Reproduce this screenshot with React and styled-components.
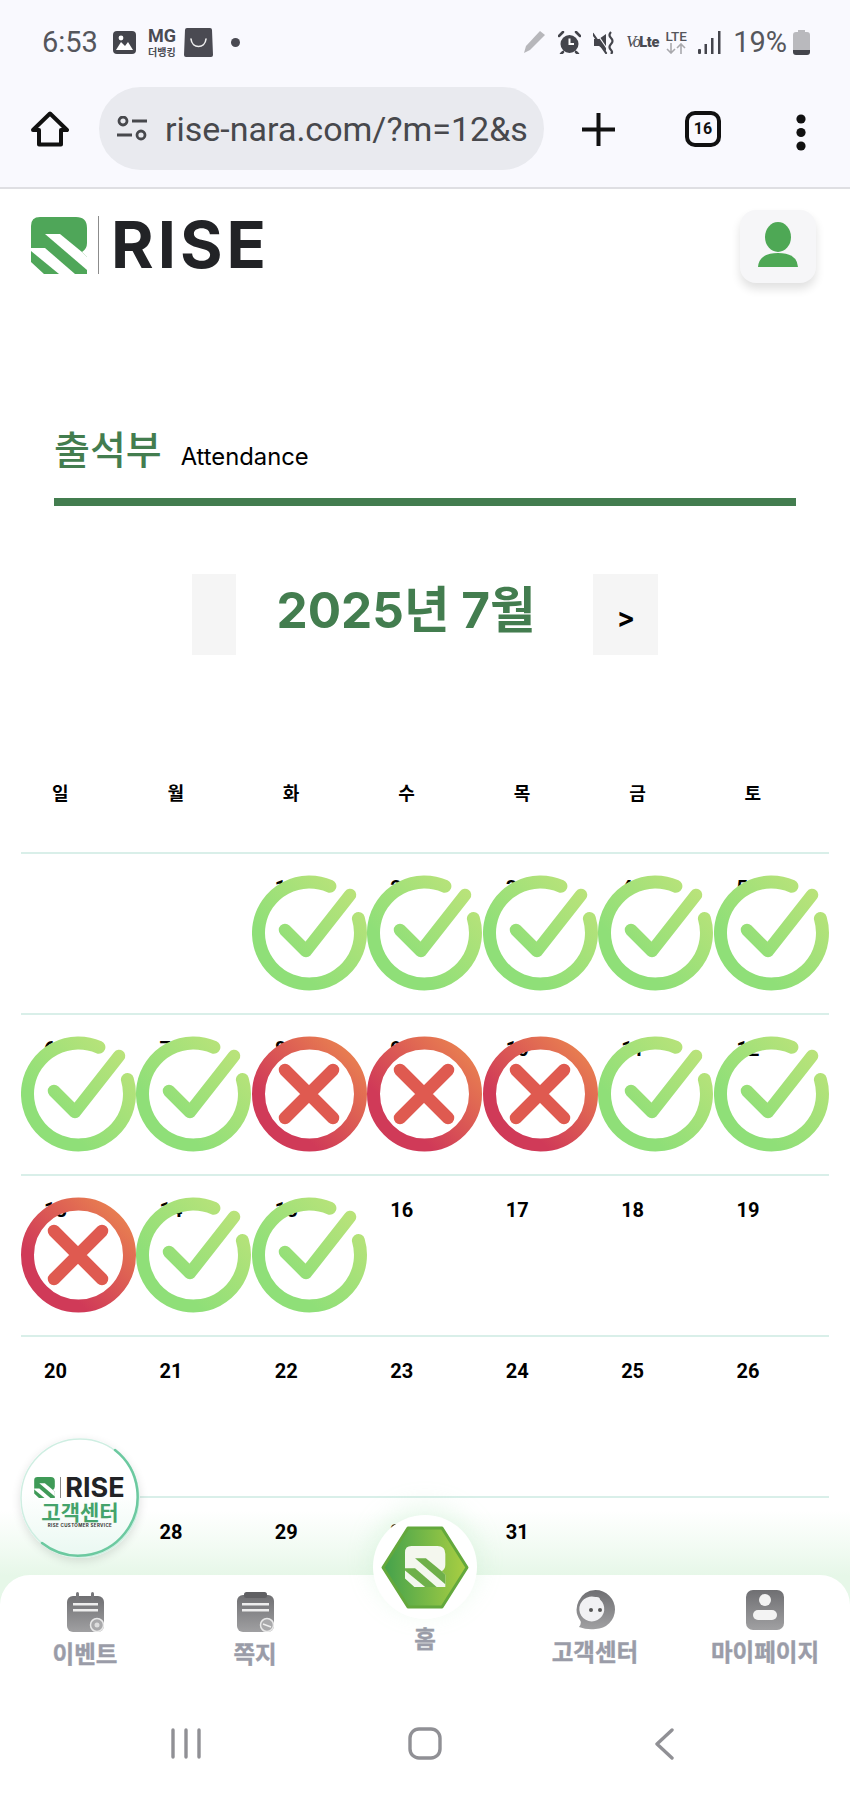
import React, { useId } from "react";
import styled, { createGlobalStyle } from "styled-components";

const Global = createGlobalStyle`
  html, body { margin: 0; padding: 0; background: #fff; }
  body { font-family: Roboto, "Noto Sans CJK KR", sans-serif; }
  * { box-sizing: border-box; }
`;

const KR = `Inter, "Noto Sans CJK KR", sans-serif`;

const Page = styled.div`
  position: relative;
  width: 850px;
  height: 1794px;
  overflow: hidden;
  background: #fff;
`;

/* ---- phone chrome ---- */
const StatusBar = styled.div`
  height: 78px;
  background: #f9f9fe;
  display: flex;
  justify-content: space-between;
  align-items: center;
  padding: 6px 40px 0 42px;
  color: #55565c;
`;
const StatusGroup = styled.div`
  display: flex;
  align-items: center;
`;
const StatusText = styled.span`
  font: 400 29px/30px Roboto, sans-serif;
  color: #55565c;
  margin: ${(p) => p.$m || 0};
`;
const StatusIcon = styled.svg`
  display: block;
  flex: none;
  margin: ${(p) => p.$m || 0};
`;
const MgBlock = styled.div`
  width: 30px;
  margin: 0 7px 0 11px;
  display: flex;
  flex-direction: column;
  align-items: center;
  color: #4a4b52;
`;
const MgTop = styled.span`
  font: 700 18px/18px Roboto, sans-serif;
`;
const MgBottom = styled.span`
  font: 700 10px/13px "Noto Sans CJK KR", sans-serif;
  white-space: nowrap;
`;
const VolteBlock = styled.div`
  width: 32px;
  margin-left: 10px;
  display: flex;
  align-items: baseline;
  color: #4a4b52;
  white-space: nowrap;
`;
const VoText = styled.span`
  font: italic 400 16px/20px "Liberation Serif", serif;
  letter-spacing: -1.5px;
`;
const LteSmall = styled.span`
  font: 900 14.5px/20px Roboto, sans-serif;
  letter-spacing: -0.3px;
`;
const LteBlock = styled.div`
  width: 24px;
  margin: 0 10px 0 6px;
  display: flex;
  flex-direction: column;
  align-items: center;
`;
const LteTop = styled.span`
  font: 500 13.5px/13px Roboto, sans-serif;
  color: #55565c;
`;

const Toolbar = styled.div`
  height: 111px;
  background: #f9f9fe;
  border-bottom: 2px solid #dfdfe3;
  display: flex;
  align-items: flex-start;
  padding: 9px 0 0 31px;
`;
const UrlPill = styled.div`
  width: 445px;
  height: 83px;
  margin-left: 30px;
  border-radius: 42px;
  background: #e9eaef;
  display: flex;
  align-items: center;
  padding: 0 16px 0 18px;
`;
const UrlText = styled.div`
  flex: 1;
  margin-left: 18px;
  overflow: hidden;
  white-space: nowrap;
  font: 400 34px/40px Roboto, sans-serif;
  color: #47484c;
`;
const ToolIcon = styled.svg`
  display: block;
  flex: none;
  margin: ${(p) => p.$m || 0};
`;
const TabCount = styled.div`
  width: 36px;
  height: 36px;
  margin: 24px 0 0 70px;
  border: 4px solid #111;
  border-radius: 10px;
  display: flex;
  align-items: center;
  justify-content: center;
  font: 700 16px/1 Roboto, sans-serif;
  color: #111;
`;

/* ---- site header ---- */
const SiteHeader = styled.header`
  display: flex;
  justify-content: space-between;
  align-items: flex-start;
  padding: 21px 34px 0 31px;
`;
const Logo = styled.div`
  display: flex;
  align-items: center;
  margin-top: 6px;
`;
const LogoDivider = styled.div`
  width: 1px;
  height: 58px;
  background: #8c8c8c;
  margin: 0 12px 0 11px;
`;
const LogoWord = styled.span`
  font: 700 65px/58px Inter, sans-serif;
  letter-spacing: 4px;
  color: #222326;
`;
const ProfileButton = styled.div`
  width: 76px;
  height: 73px;
  border-radius: 16px;
  background: #f6f6f8;
  box-shadow: 0 6px 10px rgba(0, 0, 0, 0.12);
  display: flex;
  align-items: center;
  justify-content: center;
`;

/* ---- section title ---- */
const TitleRow = styled.div`
  margin: 139px 54px 0;
  border-bottom: 8px solid #437d4f;
  display: flex;
  align-items: flex-start;
  height: 84px;
`;
const TitleKo = styled.h1`
  margin: 0;
  font: 500 39px/50px "Noto Sans CJK KR", sans-serif;
  color: #437d4f;
`;
const TitleEn = styled.span`
  margin: 20px 0 0 19px;
  font: 400 23.8px/30px Inter, sans-serif;
  color: #000;
`;

/* ---- month nav ---- */
const MonthNav = styled.div`
  margin-top: 68px;
  display: flex;
  justify-content: center;
  align-items: stretch;
  height: 81px;
`;
const MonthButton = styled.div`
  width: ${(p) => p.$w}px;
  background: #f5f5f5;
  display: flex;
  align-items: center;
  justify-content: center;
  padding-top: 6px;
  font: 700 27px/1 Inter, sans-serif;
  color: #000;
`;
const MonthLabel = styled.div`
  margin: 0 58px 0 41px;
  font: 700 49.5px/73px ${KR};
  color: #437d4f;
  white-space: nowrap;
`;

/* ---- calendar ---- */
const Calendar = styled.section`
  position: relative;
  margin: 125px 21px 0;
`;
const WeekHead = styled.div`
  display: grid;
  grid-template-columns: repeat(7, 1fr);
  height: 72px;
`;
const HeadCell = styled.div`
  padding-left: 31px;
  font: 700 18px/24px "Noto Sans CJK KR", sans-serif;
  color: #000;
`;
const Week = styled.div`
  display: grid;
  grid-template-columns: repeat(7, 1fr);
  height: 161px;
  border-top: 2px solid #d9efe9;
`;
const Day = styled.div`
  position: relative;
  padding: 22px 0 0 23px;
  font: 700 20px/24px Roboto, sans-serif;
  color: #000;
`;
const StampSvg = styled.svg`
  position: absolute;
  left: 0;
  top: 21px;
  display: block;
`;

/* ---- bottom ---- */
const Glow = styled.div`
  position: absolute;
  left: 0;
  right: 0;
  top: 1500px;
  height: 105px;
  background: linear-gradient(to bottom, rgba(232, 248, 234, 0) 10%, #f2fbf3 45%, #e6f7e8 72%);
`;
const Bottom = styled.div`
  position: absolute;
  left: 0;
  right: 0;
  bottom: 0;
  height: 219px;
`;
const TabSheet = styled.nav`
  position: relative;
  height: 219px;
  background: #fff;
  border-radius: 30px 30px 0 0;
`;
const Tabs = styled.div`
  display: grid;
  grid-template-columns: repeat(5, 170px);
  padding-top: 15px;
`;
const Tab = styled.div`
  display: flex;
  flex-direction: column;
  align-items: center;
  height: 96px;
  padding-top: ${(p) => p.$pt || 0}px;
`;
const TabLabel = styled.span`
  margin-top: ${(p) => p.$mt ?? 7}px;
  font: 700 23.5px/28px "Noto Sans CJK KR", sans-serif;
  -webkit-text-stroke: 0.4px #9a9ca8;
  color: #9a9ca8;
  white-space: nowrap;
`;
const HomeBubble = styled.div`
  position: absolute;
  left: 373px;
  top: -60px;
  width: 104px;
  height: 104px;
  border-radius: 50%;
  background: #fff;
  box-shadow: 0 -8px 26px rgba(170, 230, 180, 0.28);
  display: flex;
  align-items: center;
  justify-content: center;
`;
const SystemBar = styled.div`
  position: absolute;
  left: 0;
  right: 0;
  bottom: 34px;
  display: flex;
  justify-content: center;
  align-items: center;
  gap: 199px;
`;
const SystemSlot = styled.div`
  width: 40px;
  display: flex;
  justify-content: center;
`;

/* ---- floating support badge ---- */
const SupportBadge = styled.div`
  position: absolute;
  left: 20px;
  top: 1438px;
  width: 120px;
  height: 120px;
  border-radius: 50%;
  background: linear-gradient(to bottom, #fff 45%, #e9f8f1);
  box-shadow: 0 3px 10px rgba(0, 0, 0, 0.12);
  display: flex;
  flex-direction: column;
  align-items: center;
  padding-top: 39px;
`;
const BadgeRing = styled.svg`
  position: absolute;
  inset: 0;
`;
const BadgeLogo = styled.div`
  display: flex;
  align-items: center;
  height: 21px;
  margin-left: -1px;
`;
const BadgeDivider = styled.div`
  width: 1px;
  height: 21px;
  background: #888;
  margin: 0 4px 0 5px;
`;
const BadgeWord = styled.span`
  font: 700 27px/21px Inter, sans-serif;
  color: #222326;
`;
const BadgeKo = styled.span`
  margin-top: 1px;
  font: 700 21px/24px "Noto Sans CJK KR", sans-serif;
  color: #44a36b;
`;
const BadgeTiny = styled.span`
  font: 700 4.5px/6px Inter, sans-serif;
  letter-spacing: 0.35px;
  color: #333;
  white-space: nowrap;
`;

/* ---- drawings ---- */
function LogoMark({ w, h, fill = "#4fa659", stripe = "#fff" }) {
  return (
    <svg width={w} height={h} viewBox="0 0 56 57" style={{ display: "block", flex: "none" }}>
      <path d="M0 9 Q0 0 9 0 H45 Q56 0 56 11 V26 Q56 32 51 35 L56 40 V57 H13 L0 45 Z" fill={fill} />
      <path d="M14 17 H29 L51 35 L56 40 V53 Z" fill={stripe} />
      <path d="M0 31 H14 L44 57 H28 L0 34 Z" fill={stripe} />
    </svg>
  );
}

function Stamp({ ok }) {
  const id = useId();
  const from = ok ? "#8fdf78" : "#d03a58";
  const to = ok ? "#bce37a" : "#ea8450";
  const mark = ok ? "url(#" + id + ")" : "#df5a50";
  return (
    <StampSvg width="115" height="116" viewBox="0 0 115 116" fill="none" strokeLinecap="round" strokeLinejoin="round">
      <defs>
        <linearGradient id={id} gradientUnits="userSpaceOnUse" x1="10" y1="105" x2="105" y2="10">
          <stop offset="0.25" stopColor={from} />
          <stop offset="1" stopColor={to} />
        </linearGradient>
      </defs>
      {ok ? (
        <>
          <path d="M77.9 11.2 A51 51 0 1 0 106.4 43.5" stroke={"url(#" + id + ")"} strokeWidth="13" />
          <path d="M33 55 L54 76 L98 20" stroke={mark} strokeWidth="12.5" />
        </>
      ) : (
        <>
          <circle cx="57.5" cy="58" r="51" stroke={"url(#" + id + ")"} strokeWidth="13" />
          <path d="M33 34 L81 82 M81 34 L33 82" stroke={mark} strokeWidth="12.5" />
        </>
      )}
    </StampSvg>
  );
}

function GrayDefs({ id }) {
  return (
    <defs>
      <linearGradient id={id} x1="0" y1="0" x2="0" y2="1">
        <stop offset="0" stopColor="#6f6f72" />
        <stop offset="1" stopColor="#a0a0a2" />
      </linearGradient>
    </defs>
  );
}

function EventIcon() {
  const id = useId();
  return (
    <svg width="37" height="40" viewBox="0 0 37 40" style={{ display: "block" }}>
      <GrayDefs id={id} />
      <rect x="0" y="4" width="37" height="36" rx="6" fill={"url(#" + id + ")"} />
      <rect x="9" y="0" width="3" height="9" rx="1.5" fill="#77777a" />
      <rect x="24" y="0" width="3" height="9" rx="1.5" fill="#77777a" />
      <rect x="6" y="11" width="25" height="2.5" fill="#eee" />
      <rect x="6" y="17" width="25" height="2.5" fill="#eee" />
      <circle cx="30" cy="33" r="6.5" fill="#a9a9ab" stroke="#e8e8e8" strokeWidth="1.5" />
      <circle cx="30" cy="33" r="2.5" fill="#ddd" />
    </svg>
  );
}

function NoteIcon() {
  const id = useId();
  return (
    <svg width="37" height="40" viewBox="0 0 37 40" style={{ display: "block" }}>
      <GrayDefs id={id} />
      <rect x="0" y="3" width="37" height="37" rx="6" fill={"url(#" + id + ")"} />
      <rect x="7" y="0" width="23" height="6" rx="2.5" fill="#5f5f62" />
      <rect x="5" y="11" width="27" height="2.5" fill="#eee" />
      <rect x="5" y="17" width="27" height="2.5" fill="#eee" />
      <circle cx="30" cy="33" r="6.5" fill="#a9a9ab" stroke="#e8e8e8" strokeWidth="1.5" />
      <path d="M26 32 L34 35" stroke="#eee" strokeWidth="1.5" />
    </svg>
  );
}

function ChatIcon() {
  const id = useId();
  return (
    <svg width="39" height="40" viewBox="0 0 39 40" style={{ display: "block" }}>
      <GrayDefs id={id} />
      <path d="M19.5 0 A19.5 19.5 0 1 1 19.5 39 Q11 40 3 37 Q5.5 34 4.5 31 A19.5 19.5 0 0 1 19.5 0 Z" fill={"url(#" + id + ")"} />
      <path d="M19.5 7 Q24 6.5 24 9.5 A12.5 12.5 0 1 1 19.5 7 Z" fill="#f1f1f3" />
      <circle cx="15" cy="20" r="2" fill="#555" />
      <circle cx="24" cy="20" r="2" fill="#555" />
    </svg>
  );
}

function PersonTabIcon() {
  const id = useId();
  return (
    <svg width="38" height="40" viewBox="0 0 38 40" style={{ display: "block" }}>
      <GrayDefs id={id} />
      <rect width="38" height="40" rx="7" fill={"url(#" + id + ")"} />
      <circle cx="19" cy="10" r="6" fill="#f3f3f3" />
      <rect x="7" y="20" width="24" height="10" rx="5" fill="#f3f3f3" />
    </svg>
  );
}

function HexLogo() {
  const id = useId();
  return (
    <svg width="88" height="83" viewBox="0 0 88 83" style={{ display: "block" }}>
      <defs>
        <linearGradient id={id} x1="0" y1="0" x2="1" y2="0">
          <stop offset="0" stopColor="#43a14c" />
          <stop offset="1" stopColor="#aacf42" />
        </linearGradient>
      </defs>
      <path d="M27 2 H61 L86 41.5 L61 81 H27 L2 41.5 Z" fill={"url(#" + id + ")"} stroke="#63a83c" strokeWidth="3" strokeLinejoin="round" />
      <g transform="translate(24 20) scale(0.72)">
        <path d="M0 9 Q0 0 9 0 H45 Q56 0 56 11 V26 Q56 32 51 35 L56 40 V57 H13 L0 45 Z" fill="#f4f7ee" />
        <path d="M14 17 H29 L51 35 L56 40 V53 Z" fill="#6fb04a" />
        <path d="M0 31 H14 L44 57 H28 L0 34 Z" fill="#6fb04a" />
      </g>
    </svg>
  );
}

const ROWS = [
  [null, null, 1, 2, 3, 4, 5],
  [6, 7, 8, 9, 10, 11, 12],
  [13, 14, 15, 16, 17, 18, 19],
  [20, 21, 22, 23, 24, 25, 26],
  [27, 28, 29, 30, 31, null, null],
];
const OK = [1, 2, 3, 4, 5, 6, 7, 11, 12, 14, 15];
const NO = [8, 9, 10, 13];

export default function App() {
  return (
    <Page>
      <Global />
      <StatusBar>
        <StatusGroup>
          <StatusText>6:53</StatusText>
          <StatusIcon $m="0 0 0 15px" width="23" height="23" viewBox="0 0 23 23">
            <rect width="23" height="23" rx="4" fill="#44454c" />
            <path d="M3 19 L8 11 L12 15 L15 11 L20 19 Z" fill="#fff" />
            <circle cx="8" cy="7" r="2.4" fill="#fff" />
          </StatusIcon>
          <MgBlock>
            <MgTop>MG</MgTop>
            <MgBottom>더뱅킹</MgBottom>
          </MgBlock>
          <StatusIcon width="29" height="29" viewBox="0 0 29 29">
            <path d="M3 0 H26 Q28 0 28 2 L29 27 Q29 29 27 29 H2 Q0 29 0 27 L1 2 Q1 0 3 0 Z" fill="#4a4a52" />
            <path d="M7 11 C8 21 21 21 22 11" fill="none" stroke="#f0f0f0" strokeWidth="1.6" strokeLinecap="round" />
          </StatusIcon>
          <StatusIcon $m="0 0 0 18px" width="9" height="9" viewBox="0 0 9 9">
            <circle cx="4.5" cy="4.5" r="4.5" fill="#4a4a52" />
          </StatusIcon>
        </StatusGroup>
        <StatusGroup>
          <StatusIcon width="23" height="24" viewBox="0 0 23 24">
            <path d="M17 1 L22 5 L7 20 L1 23 L3 16 Z" fill="#b7b7bb" />
          </StatusIcon>
          <StatusIcon $m="0 0 0 12px" width="23" height="23" viewBox="0 0 23 23">
            <circle cx="11.5" cy="13" r="9" fill="#44454c" />
            <path d="M1 5 L5 1 M22 5 L18 1" stroke="#44454c" strokeWidth="2.5" strokeLinecap="round" />
            <path d="M5 21 L3 23 M18 21 L20 23" stroke="#44454c" strokeWidth="2.5" strokeLinecap="round" />
            <path d="M11.5 7.5 V13 H16" stroke="#fff" strokeWidth="2" fill="none" />
          </StatusIcon>
          <StatusIcon $m="0 0 0 12px" width="23" height="23" viewBox="0 0 23 23">
            <path d="M1 8 H6 L13 3 V20 L6 15 H1 Z" fill="#44454c" />
            <path d="M2 0 L15 19" stroke="#f9f9fe" strokeWidth="1.2" />
            <path d="M0 3 L13 22" stroke="#44454c" strokeWidth="2.2" strokeLinecap="round" />
            <path d="M18 1 Q15 4 18 7 Q21 10 18 13 Q15 16 18 19 Q20 21 18 23" fill="none" stroke="#44454c" strokeWidth="2.2" />
          </StatusIcon>
          <VolteBlock>
            <VoText>Vo</VoText>
            <LteSmall>Lte</LteSmall>
          </VolteBlock>
          <LteBlock>
            <LteTop>LTE</LteTop>
            <StatusIcon width="20" height="11" viewBox="0 0 20 11">
              <path d="M5 0 V10 M1 6 L5 10 L9 6" stroke="#a9a9ad" strokeWidth="1.6" fill="none" />
              <path d="M15 11 V1 M11 5 L15 1 L19 5" stroke="#a9a9ad" strokeWidth="1.6" fill="none" />
            </StatusIcon>
          </LteBlock>
          <StatusIcon width="23" height="23" viewBox="0 0 23 23">
            <rect x="0" y="18" width="3" height="5" rx="1" fill="#44454c" />
            <rect x="6.5" y="13" width="2.5" height="10" fill="#44454c" />
            <rect x="13" y="7" width="2.5" height="16" fill="#44454c" />
            <rect x="20" y="0" width="2.5" height="23" fill="#44454c" />
          </StatusIcon>
          <StatusText $m="0 6px 0 12px">19%</StatusText>
          <StatusIcon width="17" height="25" viewBox="0 0 17 25">
            <path d="M5 0 H12 V2 H14 Q17 2 17 5 V20 H0 V5 Q0 2 3 2 H5 Z" fill="#b9b9bd" />
            <path d="M0 20 H17 V22 Q17 25 14 25 H3 Q0 25 0 22 Z" fill="#44454c" />
          </StatusIcon>
        </StatusGroup>
      </StatusBar>

      <Toolbar>
        <ToolIcon $m="24px 0 0" width="38" height="36" viewBox="0 0 38 36" fill="none">
          <path d="M19 2.5 L36 19 H30 V33.5 H8 V19 H2 Z" stroke="#111" strokeWidth="4" strokeLinejoin="round" />
        </ToolIcon>
        <UrlPill>
          <ToolIcon width="30" height="25" viewBox="0 0 30 25" fill="none">
            <circle cx="6" cy="5" r="4" stroke="#47484c" strokeWidth="2.8" />
            <path d="M15 5 H30" stroke="#47484c" strokeWidth="3" />
            <path d="M0 19 H15" stroke="#47484c" strokeWidth="3" />
            <circle cx="24" cy="19" r="4" stroke="#47484c" strokeWidth="2.8" />
          </ToolIcon>
          <UrlText>rise-nara.com/?m=12&amp;sub=1</UrlText>
        </UrlPill>
        <ToolIcon $m="26px 0 0 38px" width="33" height="33" viewBox="0 0 33 33">
          <path d="M16.5 0 V33 M0 16.5 H33" stroke="#111" strokeWidth="4" strokeLinecap="round" />
        </ToolIcon>
        <TabCount>16</TabCount>
        <ToolIcon $m="27px 0 0 75px" width="10" height="37" viewBox="0 0 10 37">
          <circle cx="5" cy="5" r="4.6" fill="#111" />
          <circle cx="5" cy="18.5" r="4.6" fill="#111" />
          <circle cx="5" cy="32" r="4.6" fill="#111" />
        </ToolIcon>
      </Toolbar>

      <SiteHeader>
        <Logo>
          <LogoMark w={56} h={57} />
          <LogoDivider />
          <LogoWord>RISE</LogoWord>
        </Logo>
        <ProfileButton>
          <svg width="40" height="50" viewBox="0 0 40 50">
            <ellipse cx="20" cy="15" rx="13" ry="15" fill="#4ea855" />
            <path d="M0 45 Q1 31 20 31 Q39 31 40 45 Z" fill="#4ea855" />
          </svg>
        </ProfileButton>
      </SiteHeader>

      <TitleRow>
        <TitleKo>출석부</TitleKo>
        <TitleEn>Attendance</TitleEn>
      </TitleRow>

      <MonthNav>
        <MonthButton $w={44} />
        <MonthLabel>2025년 7월</MonthLabel>
        <MonthButton $w={65}>&gt;</MonthButton>
      </MonthNav>

      <Glow />

      <Calendar>
        <WeekHead>
          {["일", "월", "화", "수", "목", "금", "토"].map((d) => (
            <HeadCell key={d}>{d}</HeadCell>
          ))}
        </WeekHead>
        {ROWS.map((row, i) => (
          <Week key={i}>
            {row.map((d, j) => (
              <Day key={j}>
                {d}
                {OK.includes(d) && <Stamp ok />}
                {NO.includes(d) && <Stamp />}
              </Day>
            ))}
          </Week>
        ))}
      </Calendar>

      <Bottom>
        <TabSheet>
          <Tabs>
            <Tab $pt={2}>
              <EventIcon />
              <TabLabel>이벤트</TabLabel>
            </Tab>
            <Tab $pt={2}>
              <NoteIcon />
              <TabLabel>쪽지</TabLabel>
            </Tab>
            <Tab $pt={34}>
              <TabLabel $mt={0}>홈</TabLabel>
            </Tab>
            <Tab>
              <ChatIcon />
              <TabLabel>고객센터</TabLabel>
            </Tab>
            <Tab>
              <PersonTabIcon />
              <TabLabel>마이페이지</TabLabel>
            </Tab>
          </Tabs>
          <HomeBubble>
            <HexLogo />
          </HomeBubble>
        </TabSheet>
        <SystemBar>
          <SystemSlot>
            <svg width="30" height="31" viewBox="0 0 30 31">
              <path d="M2 2 V29 M15 2 V29 M28 2 V29" stroke="#909095" strokeWidth="3.4" strokeLinecap="round" />
            </svg>
          </SystemSlot>
          <SystemSlot>
            <svg width="34" height="33" viewBox="0 0 34 33" fill="none">
              <rect x="2" y="2" width="30" height="29" rx="9" stroke="#909095" strokeWidth="3.4" />
            </svg>
          </SystemSlot>
          <SystemSlot>
            <svg width="20" height="32" viewBox="0 0 20 32" fill="none">
              <path d="M18 2 L3 16 L18 30" stroke="#909095" strokeWidth="3.4" strokeLinecap="round" strokeLinejoin="round" />
            </svg>
          </SystemSlot>
        </SystemBar>
      </Bottom>

      <SupportBadge>
        <BadgeRing width="120" height="120" viewBox="0 0 120 120" fill="none">
          <circle cx="60" cy="60" r="59" stroke="#cfeee2" strokeWidth="1.5" />
          <path d="M95 12 A59 59 0 0 1 22 105" stroke="#6cc9a0" strokeWidth="2.5" strokeLinecap="round" />
        </BadgeRing>
        <BadgeLogo>
          <LogoMark w={21} h={21} fill="#3f9a57" />
          <BadgeDivider />
          <BadgeWord>RISE</BadgeWord>
        </BadgeLogo>
        <BadgeKo>고객센터</BadgeKo>
        <BadgeTiny>RISE CUSTOMER SERVICE</BadgeTiny>
      </SupportBadge>
    </Page>
  );
}
